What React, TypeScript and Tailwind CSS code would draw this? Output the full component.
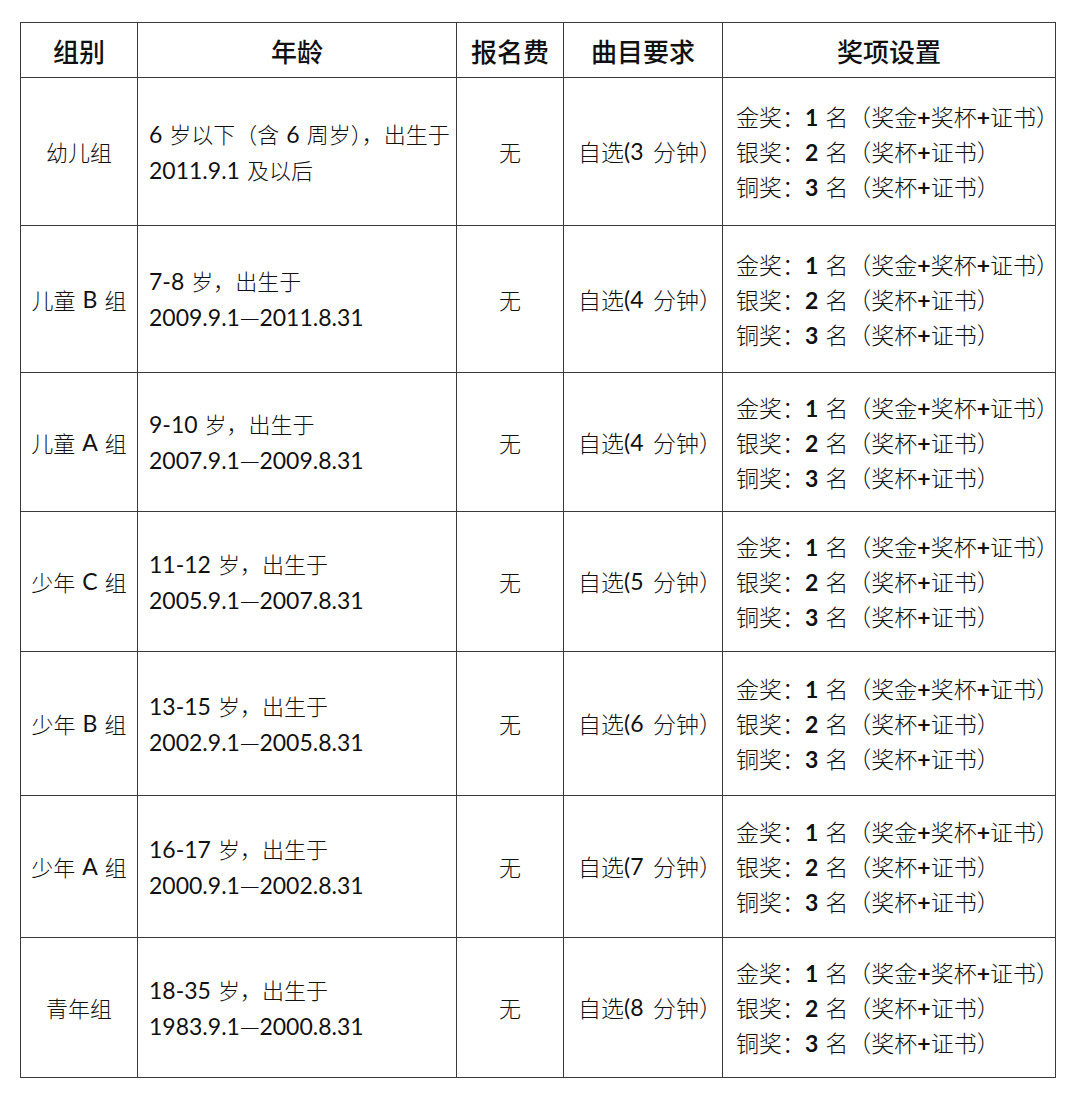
import React from "react";

const Lat = ({ t, bold, sp = "w-[7px]" }: { t: string; bold?: boolean; sp?: string }) => {
  const parts = t.split(/([\x21-\x7E]+| )/);
  return (
    <>
      {parts.map((p, i) =>
        p === " " ? (
          <span key={i} className={"inline-block " + sp} />
        ) : /^[\x21-\x7E]+$/.test(p) ? (
          <span key={i} className={"font-['Lato','Noto_Sans_CJK_SC',sans-serif] text-[23px]" + (bold ? " font-bold" : " font-normal")}>
            {p}
          </span>
        ) : p ? (
          <span key={i}>{p}</span>
        ) : null
      )}
    </>
  );
};

const rows = [
  { g: "幼儿组", a1: "6 岁以下（含 6 周岁），出生于", a2: "2011.9.1 及以后", m: 3, h: "h-[148px]" },
  { g: "儿童 B 组", a1: "7-8 岁，出生于", a2: "2009.9.1—2011.8.31", m: 4, h: "h-[147px]" },
  { g: "儿童 A 组", a1: "9-10 岁，出生于", a2: "2007.9.1—2009.8.31", m: 4, h: "h-[139px]" },
  { g: "少年 C 组", a1: "11-12 岁，出生于", a2: "2005.9.1—2007.8.31", m: 5, h: "h-[140px]" },
  { g: "少年 B 组", a1: "13-15 岁，出生于", a2: "2002.9.1—2005.8.31", m: 6, h: "h-[144px]" },
  { g: "少年 A 组", a1: "16-17 岁，出生于", a2: "2000.9.1—2002.8.31", m: 7, h: "h-[142px]" },
  { g: "青年组", a1: "18-35 岁，出生于", a2: "1983.9.1—2000.8.31", m: 8, h: "h-[140px]" },
];

const cell = "border-r border-b border-[#3a3a3a] flex items-center";

const Prize = () => (
  <div className="leading-[34px] whitespace-nowrap text-[23px]">
    <div>
      金奖：<Lat t="1" bold /><Lat t=" 名（奖金" /><Lat t="+" bold />奖杯<Lat t="+" bold />证书）
    </div>
    <div>
      银奖：<Lat t="2" bold /><Lat t=" 名（奖杯" /><Lat t="+" bold />证书）
    </div>
    <div>
      铜奖：<Lat t="3" bold /><Lat t=" 名（奖杯" /><Lat t="+" bold />证书）
    </div>
  </div>
);

export default function App() {
  return (
    <div className="w-[1080px] h-[1097px] bg-white pt-[22px] pl-[20px] font-['Noto_Sans_CJK_SC',sans-serif] font-light text-[22px] text-[#111]">
      <div className="grid grid-cols-[117px_319px_107px_159px_333px] w-[1036px] border-l border-t border-[#3a3a3a]">
        {["组别", "年龄", "报名费", "曲目要求", "奖项设置"].map((h) => (
          <div key={h} className={cell + " h-[55px] justify-center text-[26px] font-medium text-[#111]"}>
            {h}
          </div>
        ))}
        {rows.map((r, i) => (
          <React.Fragment key={i}>
            <div className={cell + " " + r.h + " justify-center whitespace-nowrap"}>
              <Lat t={r.g} />
            </div>
            <div className={cell + " " + r.h + " pl-[11px]"}>
              <div className="leading-[35px] whitespace-nowrap">
                <div>
                  <Lat t={r.a1} />
                </div>
                <div>
                  <Lat t={r.a2} />
                </div>
              </div>
            </div>
            <div className={cell + " " + r.h + " justify-center"}>无</div>
            <div className={cell + " " + r.h + " pl-[14px] whitespace-nowrap text-[23px]"}>
              <Lat t={"自选(" + r.m + " 分钟）"} sp="w-[10px]" />
            </div>
            <div className={cell + " " + r.h + " pl-[13px]"}>
              <Prize />
            </div>
          </React.Fragment>
        ))}
      </div>
    </div>
  );
}
